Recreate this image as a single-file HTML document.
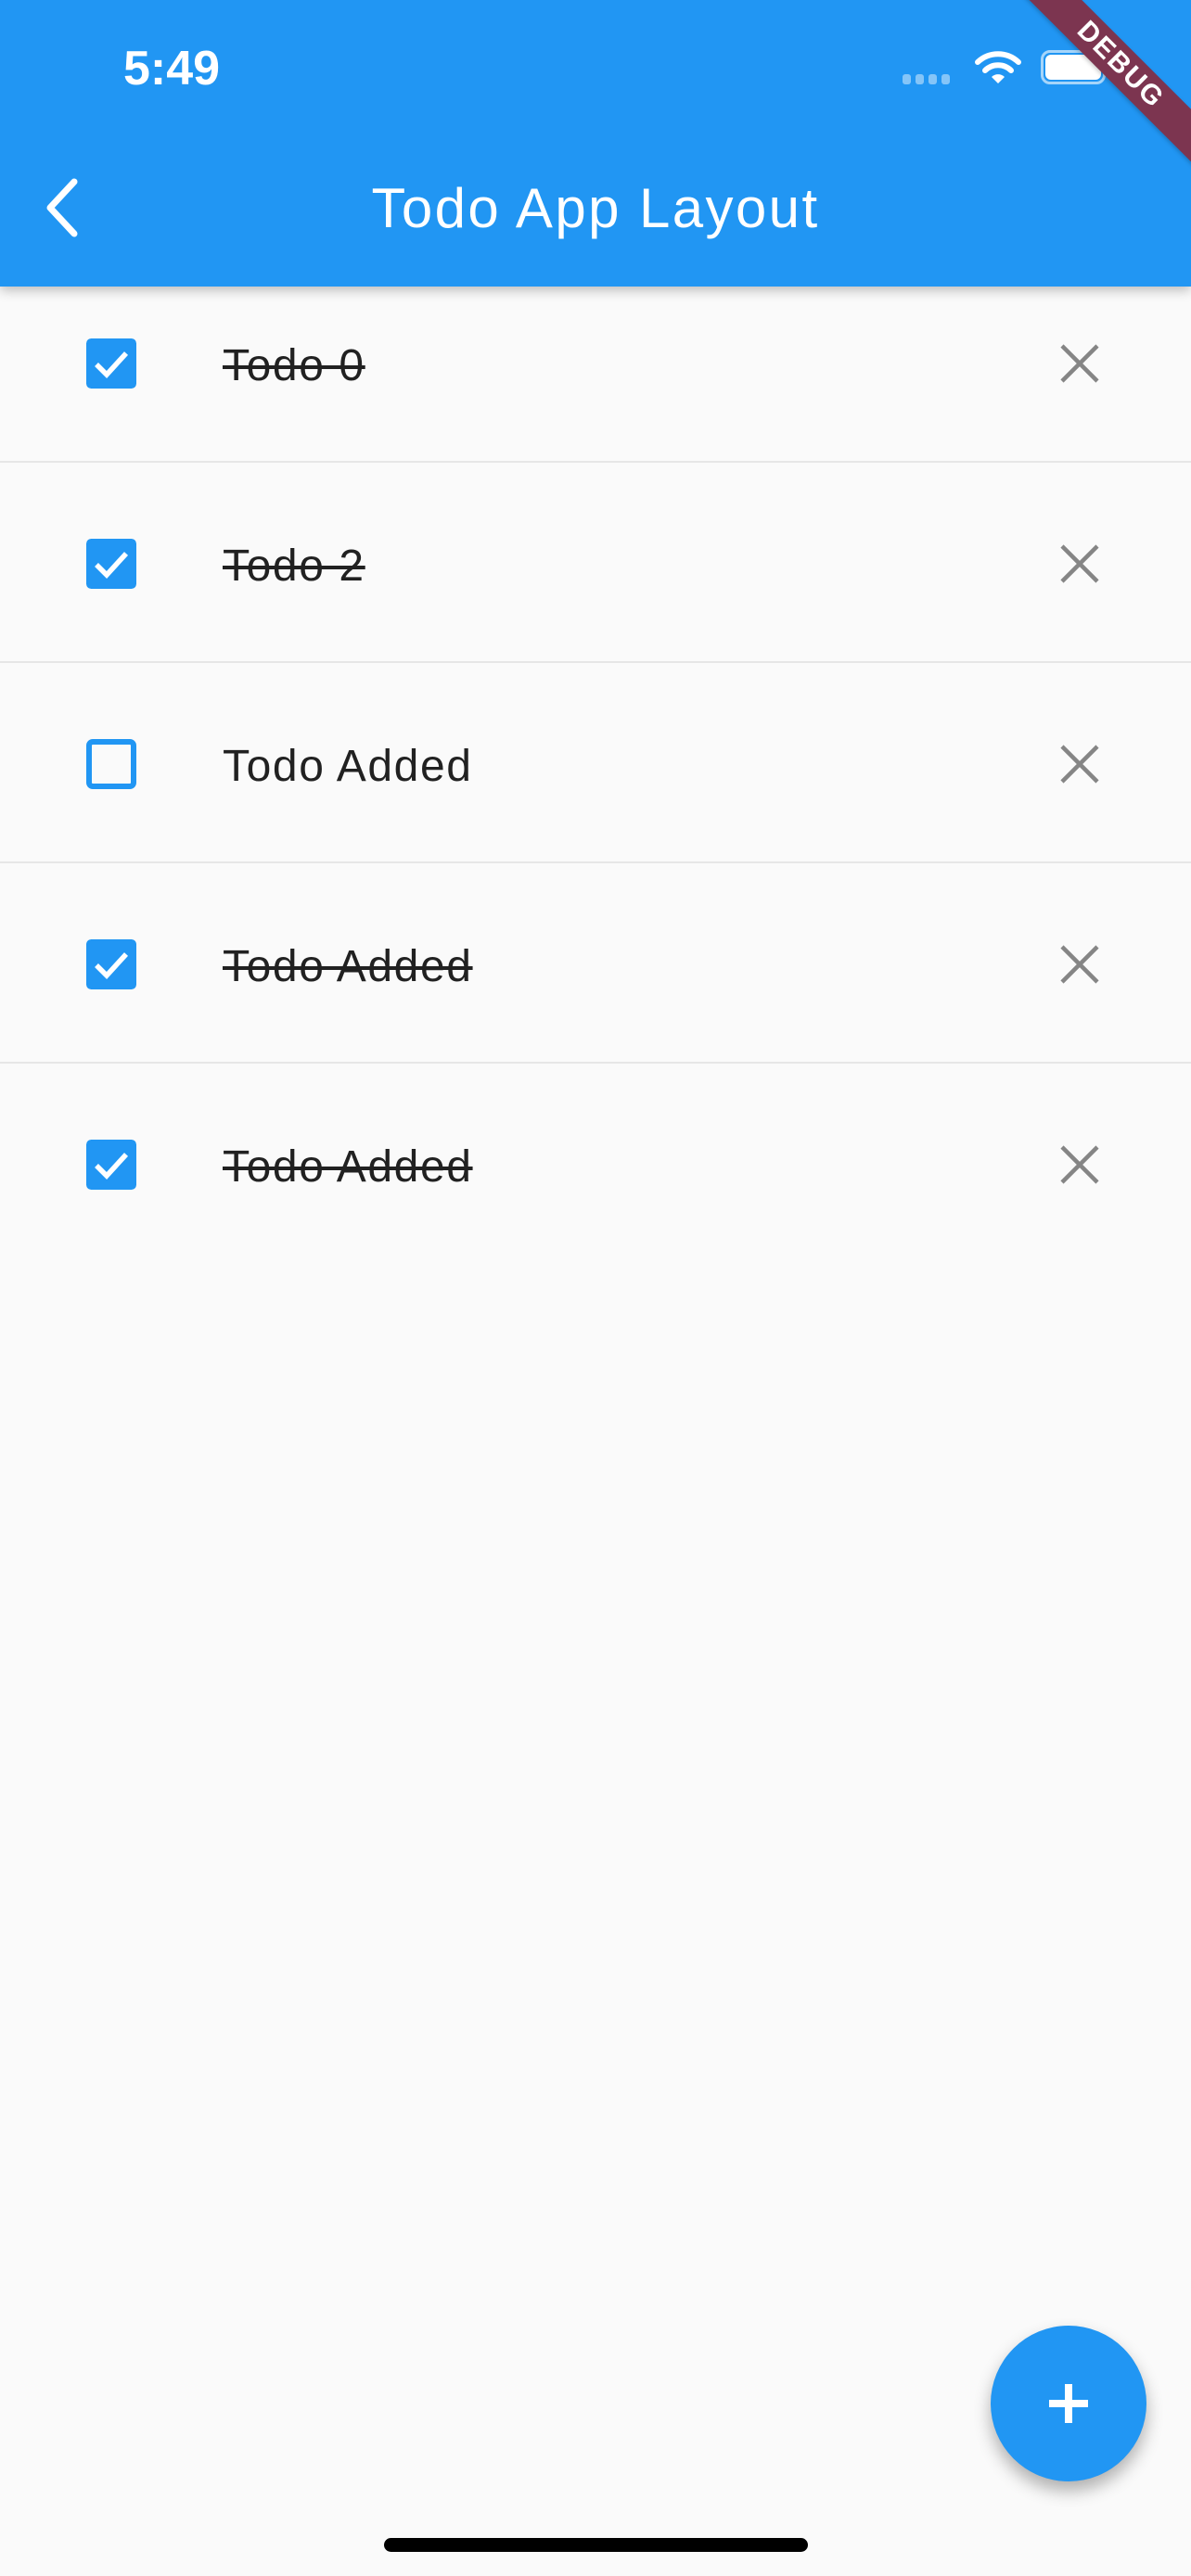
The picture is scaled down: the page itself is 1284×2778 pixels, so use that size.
<!DOCTYPE html>
<html><head><meta charset="utf-8">
<style>
*{margin:0;padding:0;box-sizing:border-box}
html,body{width:1284px;height:2778px;overflow:hidden;background:#FAFAFA;font-family:"Liberation Sans",sans-serif}
.appbar{position:absolute;left:0;top:0;width:1284px;height:309px;background:#2196F3;box-shadow:0 4px 12px rgba(0,0,0,0.25);z-index:2}
.time{position:absolute;left:133px;top:44px;font-size:52px;color:#fff;font-weight:bold;letter-spacing:0px}
.title{position:absolute;left:0;width:1284px;text-align:center;top:190px;font-size:60px;color:#fff;letter-spacing:2.4px}
.row{position:absolute;left:0;width:1284px;height:216px;border-bottom:2px solid #E6E6E6}
.cb{position:absolute;left:93px;width:54px;height:54px;border-radius:5px}
.txt{position:absolute;left:240px;font-size:48px;color:#212121;line-height:54px;letter-spacing:1.6px}
.x{position:absolute;left:1142px;width:44px;height:44px}
.ribbon{position:absolute;left:1053px;top:50px;width:310px;height:40px;background:#7C3550;transform:rotate(45deg);color:#fff;font-weight:bold;font-size:30px;text-align:center;line-height:40px;letter-spacing:2px;z-index:5;box-shadow:0 2px 4px rgba(0,0,0,0.2)}
.fab{position:absolute;left:1068px;top:2508px;width:168px;height:168px;border-radius:50%;background:#2196F3;box-shadow:0 10px 18px rgba(0,0,0,0.3)}
.home{position:absolute;left:414px;top:2737px;width:457px;height:15px;border-radius:8px;background:#000}
</style></head><body>
<div class="appbar">
 <div class="time">5:49</div>
 <svg style="position:absolute;left:970px;top:78px" width="64" height="14"><g fill="#fff" opacity="0.45"><rect x="3" y="2" width="9" height="11" rx="3"/><rect x="17" y="2" width="9" height="11" rx="3"/><rect x="31" y="2" width="9" height="11" rx="3"/><rect x="45" y="2" width="9" height="11" rx="3"/></g></svg>
 <svg style="position:absolute;left:1050px;top:52px" width="52" height="40" viewBox="0 0 52 40"><path d="M4 15 A32 32 0 0 1 48 15" stroke="#fff" stroke-width="6" fill="none" stroke-linecap="round"/><path d="M12 24 A20 20 0 0 1 40 24" stroke="#fff" stroke-width="6" fill="none" stroke-linecap="round"/><path d="M26 38 L19 31 A10 10 0 0 1 33 31 Z" fill="#fff"/></svg>
 <div style="position:absolute;left:1122px;top:54px;width:70px;height:37px;border:3px solid rgba(255,255,255,0.6);border-radius:10px"></div>
 <div style="position:absolute;left:1127px;top:59px;width:60px;height:27px;background:#fff;border-radius:6px"></div>
 <svg style="position:absolute;left:44px;top:192px" width="44" height="64" viewBox="0 0 44 64"><path d="M36 4 L10 32 L36 60" stroke="#fff" stroke-width="7" fill="none" stroke-linecap="round" stroke-linejoin="round"/></svg>
 <div class="title">Todo App Layout</div>
</div>
<div class="ribbon">DEBUG</div>

<div class="row" style="top:283px"></div>
<div class="row" style="top:499px"></div>
<div class="row" style="top:715px"></div>
<div class="row" style="top:931px"></div>

<svg class="cb" style="top:365px" viewBox="0 0 54 54"><rect width="54" height="54" rx="5" fill="#2196F3"/><path d="M11 28 L22 39 L43 16" stroke="#fff" stroke-width="5.5" fill="none"/></svg>
<div class="txt" style="top:368px;text-decoration:line-through">Todo 0</div>
<svg class="x" style="top:370px" viewBox="0 0 44 44"><path d="M3 3 L41 41 M41 3 L3 41" stroke="#858585" stroke-width="4.5"/></svg>

<svg class="cb" style="top:581px" viewBox="0 0 54 54"><rect width="54" height="54" rx="5" fill="#2196F3"/><path d="M11 28 L22 39 L43 16" stroke="#fff" stroke-width="5.5" fill="none"/></svg>
<div class="txt" style="top:584px;text-decoration:line-through">Todo 2</div>
<svg class="x" style="top:586px" viewBox="0 0 44 44"><path d="M3 3 L41 41 M41 3 L3 41" stroke="#858585" stroke-width="4.5"/></svg>

<svg class="cb" style="top:797px" viewBox="0 0 54 54"><rect x="3" y="3" width="48" height="48" rx="4" fill="none" stroke="#2196F3" stroke-width="6"/></svg>
<div class="txt" style="top:800px">Todo Added</div>
<svg class="x" style="top:802px" viewBox="0 0 44 44"><path d="M3 3 L41 41 M41 3 L3 41" stroke="#858585" stroke-width="4.5"/></svg>

<svg class="cb" style="top:1013px" viewBox="0 0 54 54"><rect width="54" height="54" rx="5" fill="#2196F3"/><path d="M11 28 L22 39 L43 16" stroke="#fff" stroke-width="5.5" fill="none"/></svg>
<div class="txt" style="top:1016px;text-decoration:line-through">Todo Added</div>
<svg class="x" style="top:1018px" viewBox="0 0 44 44"><path d="M3 3 L41 41 M41 3 L3 41" stroke="#858585" stroke-width="4.5"/></svg>

<svg class="cb" style="top:1229px" viewBox="0 0 54 54"><rect width="54" height="54" rx="5" fill="#2196F3"/><path d="M11 28 L22 39 L43 16" stroke="#fff" stroke-width="5.5" fill="none"/></svg>
<div class="txt" style="top:1232px;text-decoration:line-through">Todo Added</div>
<svg class="x" style="top:1234px" viewBox="0 0 44 44"><path d="M3 3 L41 41 M41 3 L3 41" stroke="#858585" stroke-width="4.5"/></svg>

<div class="fab"><svg style="position:absolute;left:63px;top:63px" width="42" height="42"><rect x="17" y="0" width="8" height="42" fill="#fff"/><rect x="0" y="17" width="42" height="8" fill="#fff"/></svg></div>
<div class="home"></div>
</body></html>
